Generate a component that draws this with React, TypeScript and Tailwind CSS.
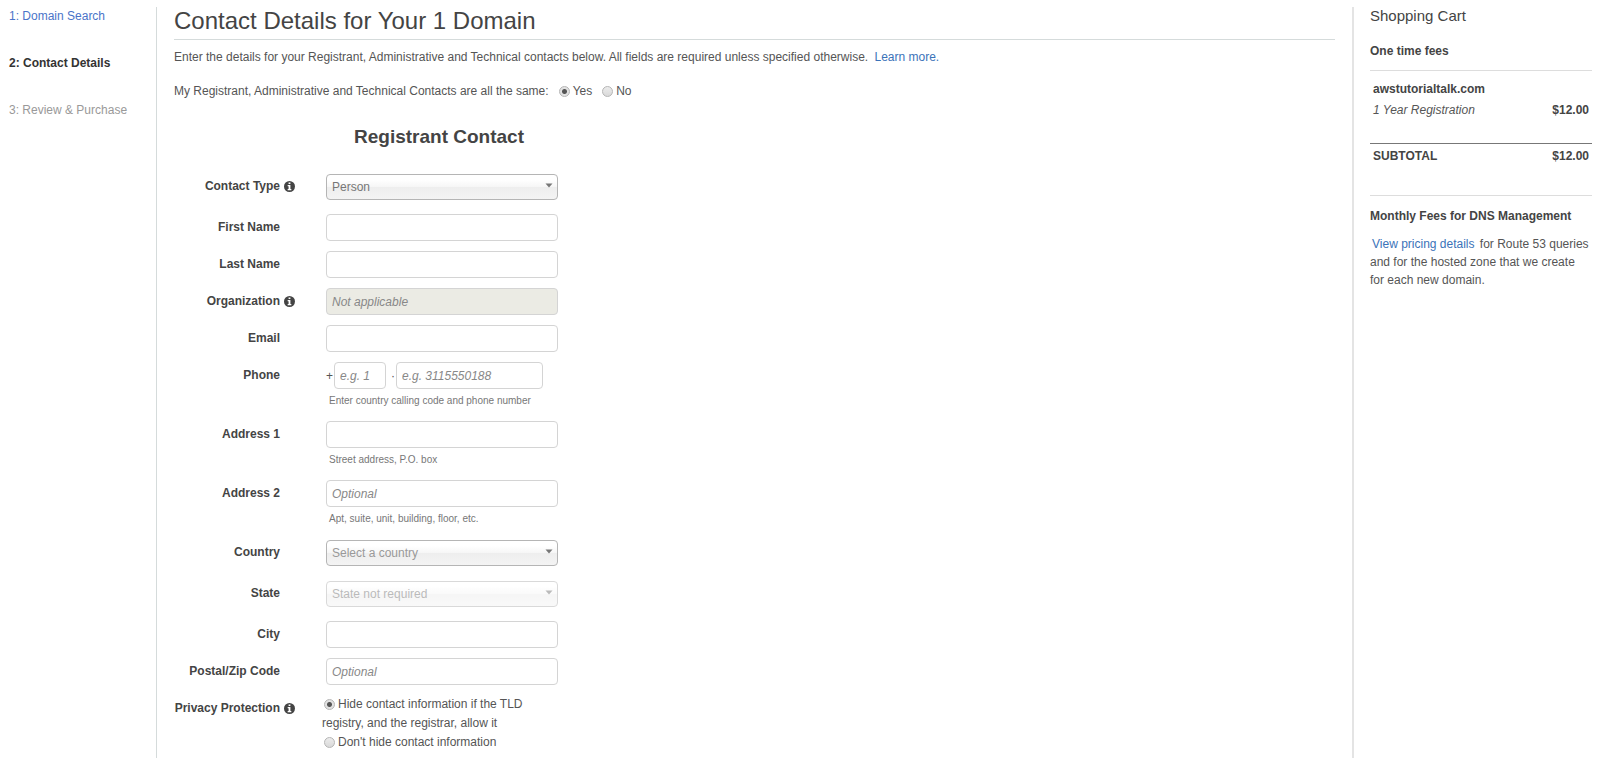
import React, { useState } from 'react';

const inputClass =
  'block h-[27px] w-full rounded-[4px] border border-[#d4d4d4] bg-white px-[5px] text-[12px] text-[#555] outline-none placeholder:italic placeholder:text-[#888] placeholder:opacity-100 disabled:bg-[#ebebe4]';

const radioClass =
  'm-0 h-[11px] w-[11px] shrink-0 appearance-none rounded-full border border-[#b5b5b5] bg-gradient-to-b from-[#ececec] to-[#d9d9d9] checked:bg-[radial-gradient(circle,#555_0,#555_2px,#e2e2e2_3px)]';

function InfoIcon() {
  return (
    <svg width="11" height="11" viewBox="0 0 12 12" aria-hidden="true">
      <circle cx="6" cy="6" r="6" fill="currentColor" />
      <path d="M5 1.5h2v1.8H5zM4 4.4h3v4.2h1V10H4V8.600h1V5.700H4z" fill="#fff" />
    </svg>
  );
}

interface RowProps {
  id: string;
  label: string;
  info?: boolean;
  help?: string;
  wide?: boolean;
  children: React.ReactNode;
}

function Row({ id, label, info, help, wide, children }: RowProps) {
  return (
    <div className={`flex ${wide ? 'mb-[14px]' : 'mb-[10px]'}`}>
      <div className="flex h-[26px] w-[121px] shrink-0 items-center justify-end">
        <label htmlFor={id} className="whitespace-nowrap font-bold text-[#444]">
          {label}
        </label>
        <span className="flex w-[15px] shrink-0 justify-end text-[#444]">
          {info && <InfoIcon />}
        </span>
      </div>
      <div className="ml-[31px] w-[232px] shrink-0">
        {children}
        {help && <p className="h-[22px] pt-[3px] pl-[3px] text-[10px] leading-[18px] text-[#777]">{help}</p>}
      </div>
    </div>
  );
}

interface SelectProps {
  id: string;
  option: string;
  className: string;
  disabled?: boolean;
}

function Select({ id, option, className, disabled }: SelectProps) {
  return (
    <div className={`relative pt-px ${disabled ? 'opacity-50' : ''}`}>
      <select
        id={id}
        disabled={disabled}
        className={`block h-[26px] w-full appearance-none rounded-[4px] border border-[#b5b5b5] bg-[linear-gradient(#fff_20%,#f6f6f6_50%,#eee_52%,#f4f4f4_100%)] px-[5px] text-[12px] opacity-100 outline-none ${className}`}
      >
        <option>{option}</option>
      </select>
      <svg className="pointer-events-none absolute top-[10px] right-[5px]" width="8" height="5" viewBox="0 0 8 5">
        <path d="M0.5 0.5h7L4 4.5z" fill="#777" />
      </svg>
    </div>
  );
}

function Sidebar() {
  return (
    <nav className="w-[157px] shrink-0 border-r border-[#d5dbdb] pl-[9px]">
      <ol className="flex flex-col gap-[29px]">
        <li>
          <a href="#search" className="text-[#4a74c9]">1: Domain Search</a>
        </li>
        <li className="font-bold text-[#333]">2: Contact Details</li>
        <li className="text-[#999]">3: Review &amp; Purchase</li>
      </ol>
    </nav>
  );
}

function Cart() {
  return (
    <aside className="mr-2 w-[240px] shrink-0 border-l-2 border-[#e4e4e4] pl-[16px] text-[#444]">
      <h2 className="text-[15px] leading-[18px]">Shopping Cart</h2>
      <h3 className="mt-[17px] font-bold">One time fees</h3>
      <table className="mt-[10px] w-full border-t border-[#ddd]">
        <tbody>
          <tr>
            <th colSpan={2} className="pt-[9px] pl-[3px] text-left font-bold">awstutorialtalk.com</th>
          </tr>
          <tr className="align-top">
            <td className="h-[45px] pt-[3px] pl-[3px] text-[#555] italic">1 Year Registration</td>
            <td className="pt-[3px] pr-[3px] text-right font-bold">$12.00</td>
          </tr>
          <tr className="border-t border-[#777] align-top">
            <td className="h-[52px] pt-[3px] pl-[3px] font-bold">SUBTOTAL</td>
            <td className="pt-[3px] pr-[3px] text-right font-bold">$12.00</td>
          </tr>
        </tbody>
      </table>
      <h3 className="border-t border-[#ddd] pt-[11px] font-bold">Monthly Fees for DNS Management</h3>
      <p className="mt-[10px] text-[#555]">
        <a href="#pricing" className="mx-[2px] text-[#3b73b9]">View pricing details</a> for Route 53 queries and for
        the hosted zone that we create for each new domain.
      </p>
    </aside>
  );
}

export default function App() {
  const [same, setSame] = useState(true);
  const [hidden, setHidden] = useState(true);

  return (
    <div className="flex min-h-screen bg-white pt-[7px] font-['Liberation_Sans',Arial,sans-serif] text-[12px] leading-[18px] text-[#555]">
      <Sidebar />

      <main className="min-w-0 flex-1 px-[17px]">
        <h1 className="border-b border-[#d5dbdb] pb-[5px] text-[24px] leading-[27px] text-[#444]">
          Contact Details for Your 1 Domain
        </h1>
        <p className="mt-[8px]">
          Enter the details for your Registrant, Administrative and Technical contacts below. All fields are required
          unless specified otherwise.{' '}
          <a href="#learn" className="ml-[3px] text-[#3b73b9]">Learn more.</a>
        </p>

        <div className="mt-[16px] flex items-center">
          <span>My Registrant, Administrative and Technical Contacts are all the same:</span>
          <label className="ml-[10px] flex items-center gap-[3px]">
            <input type="radio" name="same" className={radioClass} checked={same} onChange={() => setSame(true)} />
            Yes
          </label>
          <label className="ml-[10px] flex items-center gap-[3px]">
            <input type="radio" name="same" className={radioClass} checked={!same} onChange={() => setSame(false)} />
            No
          </label>
        </div>

        <form>
          <h2 className="mt-[25px] mb-[24px] ml-[180px] text-[19px] leading-[24px] font-bold text-[#444]">
            Registrant Contact
          </h2>

          <Row id="type" label="Contact Type" info wide>
            <Select id="type" option="Person" className="text-[#777]" />
          </Row>
          <Row id="first" label="First Name">
            <input id="first" type="text" className={inputClass} />
          </Row>
          <Row id="last" label="Last Name">
            <input id="last" type="text" className={inputClass} />
          </Row>
          <Row id="org" label="Organization" info>
            <input id="org" type="text" placeholder="Not applicable" disabled className={inputClass} />
          </Row>
          <Row id="email" label="Email">
            <input id="email" type="email" className={inputClass} />
          </Row>
          <Row id="phone" label="Phone" help="Enter country calling code and phone number">
            <div className="flex items-center">
              <span className="w-[8px]">+</span>
              <div className="w-[52px]">
                <input type="text" aria-label="Country code" placeholder="e.g. 1" className={inputClass} />
              </div>
              <span className="w-[10px] pl-[5px]">·</span>
              <div className="w-[147px]">
                <input id="phone" type="tel" placeholder="e.g. 3115550188" className={inputClass} />
              </div>
            </div>
          </Row>
          <Row id="address1" label="Address 1" help="Street address, P.O. box">
            <input id="address1" type="text" className={inputClass} />
          </Row>
          <Row id="address2" label="Address 2" help="Apt, suite, unit, building, floor, etc.">
            <input id="address2" type="text" placeholder="Optional" className={inputClass} />
          </Row>
          <Row id="country" label="Country" wide>
            <Select id="country" option="Select a country" className="text-[#999]" />
          </Row>
          <Row id="state" label="State" wide>
            <Select id="state" option="State not required" className="text-[#777]" disabled />
          </Row>
          <Row id="city" label="City">
            <input id="city" type="text" className={inputClass} />
          </Row>
          <Row id="zip" label="Postal/Zip Code">
            <input id="zip" type="text" placeholder="Optional" className={inputClass} />
          </Row>
          <Row id="privacy" label="Privacy Protection" info>
            <div className="-mb-[10px] -ml-1 leading-[19px]">
              <label className="block">
                <input
                  id="privacy"
                  type="radio"
                  name="privacy"
                  className={`${radioClass} mr-[3px] ml-[2px] inline-block align-middle`}
                  checked={hidden}
                  onChange={() => setHidden(true)}
                />
                Hide contact information if the TLD registry, and the registrar, allow it
              </label>
              <label className="block">
                <input
                  type="radio"
                  name="privacy"
                  className={`${radioClass} mr-[3px] ml-[2px] inline-block align-middle`}
                  checked={!hidden}
                  onChange={() => setHidden(false)}
                />
                Don't hide contact information
              </label>
            </div>
          </Row>
        </form>
      </main>

      <Cart />
    </div>
  );
}
